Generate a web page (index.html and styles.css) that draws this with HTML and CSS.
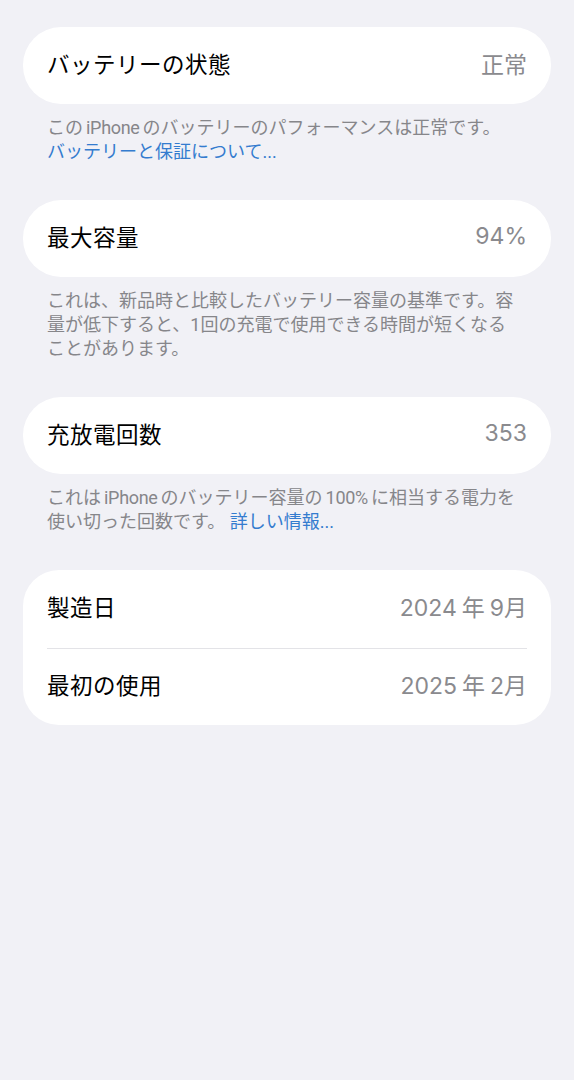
FILE: index.html
```html
<!DOCTYPE html>
<html lang="ja">
<head>
    <meta charset="UTF-8"/>
    <title>バッテリーの状態</title>
    <link rel="stylesheet" href="styles.css">
</head>
<body>
<main class="page">

    <section class="group">
        <div class="card">
            <div class="row">
                <span class="label">バッテリーの状態</span>
                <span class="value">正常</span>
            </div>
        </div>
        <p class="note">
            この<span class="lat">iPhone</span>のバッテリーのパフォーマンスは正常です。<br>
            <a href="#" class="link">バッテリーと保証について...</a>
        </p>
    </section>

    <section class="group">
        <div class="card">
            <div class="row">
                <span class="label">最大容量</span>
                <span class="value">94%</span>
            </div>
        </div>
        <p class="note">
            これは、新品時と比較したバッテリー容量の基準です。容量が低下すると、1回の充電で使用できる時間が短くなることがあります。
        </p>
    </section>

    <section class="group">
        <div class="card">
            <div class="row">
                <span class="label">充放電回数</span>
                <span class="value">353</span>
            </div>
        </div>
        <p class="note">
            これは<span class="lat">iPhone</span>のバッテリー容量の<span class="lat">100%</span>に相当する電力を使い切った回数です。 <a href="#" class="link">詳しい情報...</a>
        </p>
    </section>

    <section class="group">
        <div class="card card-list">
            <div class="row">
                <span class="label">製造日</span>
                <span class="value">2024<span class="gap">年</span>9月</span>
            </div>
            <div class="row">
                <span class="label">最初の使用</span>
                <span class="value">2025<span class="gap">年</span>2月</span>
            </div>
        </div>
    </section>

</main>
</body>
</html>
```

FILE: styles.css
```css
body {
    margin: 0;
    background: #f1f1f6;
    font-family: Inter, "Noto Sans CJK JP", sans-serif;
    color: #000;
}

.page {
    padding: 27px 23px 0 23px;
}

.group {
    margin-bottom: 36px;
}

.card {
    background: #fff;
    border-radius: 38px;
}

.card-list {
    border-radius: 36px;
}

.row {
    box-sizing: border-box;
    display: flex;
    justify-content: space-between;
    align-items: center;
    height: 77px;
    padding: 0 24px 5px 24px;
}

.card-list .row {
    height: 77.5px;
}

.card-list .row + .row {
    position: relative;
}

.card-list .row + .row::before {
    content: "";
    position: absolute;
    top: 0;
    left: 24px;
    right: 24px;
    border-top: 1px solid #e3e3e7;
}

.label {
    color: #000;
    font-size: 22.5px;
    letter-spacing: 0.5px;
}

.value {
    color: #8a8a8e;
    font-size: 23px;
}

.gap {
    margin: 0 5px;
}

.note {
    margin: 0;
    padding: 12px 28px 0 24px;
    font-family: Roboto, "Noto Sans CJK JP", sans-serif;
    font-size: 18px;
    line-height: 24px;
    color: #86868a;
}

.lat {
    margin: 0 3px;
    letter-spacing: -0.3px;
}

.link {
    color: #347ccf;
    text-decoration: none;
}
```
